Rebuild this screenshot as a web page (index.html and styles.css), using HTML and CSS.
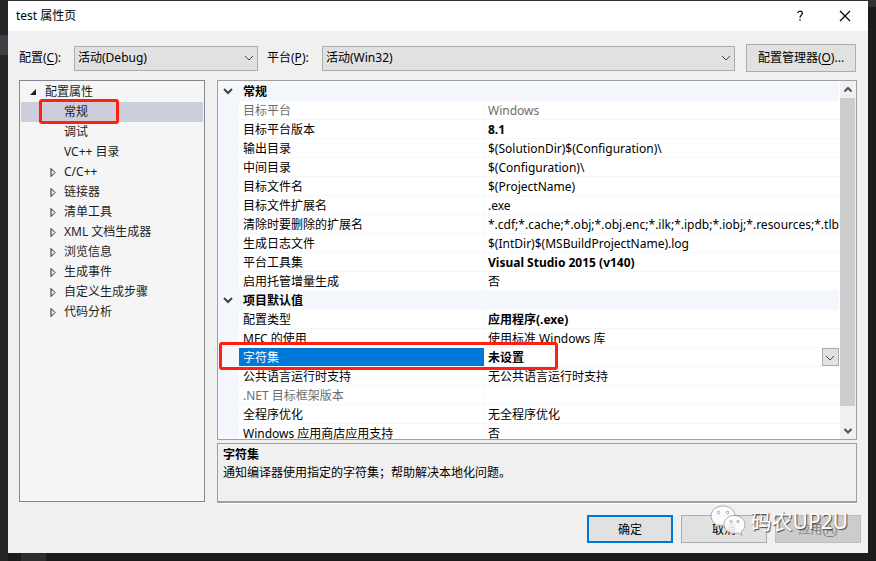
FILE: index.html
```html
<!DOCTYPE html>
<html lang="zh-CN">
<head>
    <meta charset="UTF-8">
    <meta name="viewport" content="width=device-width, initial-scale=1.0">
    <title>test 属性页</title>
    <link rel="stylesheet" href="styles.css">
</head>
<body>
    <div class="dialog">
        <header class="titlebar">
            <h1>test 属性页</h1>
            <button class="title-btn" type="button" aria-label="帮助">
                <svg width="12" height="12" viewBox="0 0 12 12"><path d="M3.7 3.2Q4 1.2 6 1.2Q8.3 1.2 8.3 3.2Q8.3 4.4 7 5.4Q6 6.2 6 7.8M6 9.3V10.8" /></svg>
            </button>
            <button class="title-btn" type="button" aria-label="关闭">
                <svg width="12" height="12" viewBox="0 0 12 12"><path d="M1 1L11 11M11 1L1 11" /></svg>
            </button>
        </header>
        <div class="toolbar">
            <label for="config">配置(<u>C</u>):</label>
            <div class="select config">
                <select id="config"><option>活动(Debug)</option></select>
                <svg class="arrow" width="10" height="6" viewBox="0 0 10 6"><path d="M1 1L5 5L9 1" /></svg>
            </div>
            <label for="platform">平台(<u>P</u>):</label>
            <div class="select platform">
                <select id="platform"><option>活动(Win32)</option></select>
                <svg class="arrow" width="10" height="6" viewBox="0 0 10 6"><path d="M1 1L5 5L9 1" /></svg>
            </div>
            <button class="btn manager" type="button">配置管理器(<u>O</u>)...</button>
        </div>
        <main class="main">
            <ul class="tree">
                <li class="root"><svg width="8" height="8" viewBox="0 0 8 8"><path d="M7 1V7H1Z" fill="#1e1e1e" /></svg>配置属性</li>
                <li class="selected">常规<span class="mark"></span></li>
                <li>调试</li>
                <li>VC++ 目录</li>
                <li><svg width="6" height="9" viewBox="0 0 6 9"><path d="M1 0.5L5 4.5L1 8.5Z" /></svg>C/C++</li>
                <li><svg width="6" height="9" viewBox="0 0 6 9"><path d="M1 0.5L5 4.5L1 8.5Z" /></svg>链接器</li>
                <li><svg width="6" height="9" viewBox="0 0 6 9"><path d="M1 0.5L5 4.5L1 8.5Z" /></svg>清单工具</li>
                <li><svg width="6" height="9" viewBox="0 0 6 9"><path d="M1 0.5L5 4.5L1 8.5Z" /></svg>XML 文档生成器</li>
                <li><svg width="6" height="9" viewBox="0 0 6 9"><path d="M1 0.5L5 4.5L1 8.5Z" /></svg>浏览信息</li>
                <li><svg width="6" height="9" viewBox="0 0 6 9"><path d="M1 0.5L5 4.5L1 8.5Z" /></svg>生成事件</li>
                <li><svg width="6" height="9" viewBox="0 0 6 9"><path d="M1 0.5L5 4.5L1 8.5Z" /></svg>自定义生成步骤</li>
                <li><svg width="6" height="9" viewBox="0 0 6 9"><path d="M1 0.5L5 4.5L1 8.5Z" /></svg>代码分析</li>
            </ul>
            <div class="right">
                <div class="props">
                    <div class="view">
                        <table>
                            <colgroup><col class="gutter"><col class="name"><col></colgroup>
                            <tbody>
                                <tr class="group"><td><svg width="10" height="7" viewBox="0 0 10 7"><path d="M1 1L5 5L9 1" /></svg></td><th colspan="2">常规</th></tr>
                                <tr class="off"><td></td><th>目标平台</th><td>Windows</td></tr>
                                <tr><td></td><th>目标平台版本</th><td><b>8.1</b></td></tr>
                                <tr><td></td><th>输出目录</th><td>$(SolutionDir)$(Configuration)\</td></tr>
                                <tr><td></td><th>中间目录</th><td>$(Configuration)\</td></tr>
                                <tr><td></td><th>目标文件名</th><td>$(ProjectName)</td></tr>
                                <tr><td></td><th>目标文件扩展名</th><td>.exe</td></tr>
                                <tr><td></td><th>清除时要删除的扩展名</th><td>*.cdf;*.cache;*.obj;*.obj.enc;*.ilk;*.ipdb;*.iobj;*.resources;*.tlb;*.tli</td></tr>
                                <tr><td></td><th>生成日志文件</th><td>$(IntDir)$(MSBuildProjectName).log</td></tr>
                                <tr><td></td><th>平台工具集</th><td><b>Visual Studio 2015 (v140)</b></td></tr>
                                <tr><td></td><th>启用托管增量生成</th><td>否</td></tr>
                                <tr class="group"><td><svg width="10" height="7" viewBox="0 0 10 7"><path d="M1 1L5 5L9 1" /></svg></td><th colspan="2">项目默认值</th></tr>
                                <tr><td></td><th>配置类型</th><td><b>应用程序(.exe)</b></td></tr>
                                <tr><td></td><th>MFC 的使用</th><td>使用标准 Windows 库</td></tr>
                                <tr class="current">
                                    <td class="anchor"><span class="mark"></span></td>
                                    <th><label for="charset">字符集</label></th>
                                    <td>
                                        <div class="select cell">
                                            <select id="charset"><option>未设置</option></select>
                                            <span class="drop"><svg class="arrow" width="10" height="6" viewBox="0 0 10 6"><path d="M1 1L5 5L9 1" /></svg></span>
                                        </div>
                                    </td>
                                </tr>
                                <tr><td></td><th>公共语言运行时支持</th><td>无公共语言运行时支持</td></tr>
                                <tr class="off"><td></td><th>.NET 目标框架版本</th><td></td></tr>
                                <tr><td></td><th>全程序优化</th><td>无全程序优化</td></tr>
                                <tr><td></td><th>Windows 应用商店应用支持</th><td>否</td></tr>
                            </tbody>
                        </table>
                    </div>
                    <div class="scrollbar">
                        <svg width="10" height="17" viewBox="0 0 10 17"><path d="M1.5 10.5L5 7L8.5 10.5" /></svg>
                        <div class="track"><div class="thumb"></div></div>
                        <svg width="10" height="17" viewBox="0 0 10 17"><path d="M1.5 7L5 10.5L8.5 7" /></svg>
                    </div>
                </div>
                <div class="help">
                    <h2>字符集</h2>
                    <p>通知编译器使用指定的字符集；帮助解决本地化问题。</p>
                </div>
            </div>
        </main>
        <footer class="footer">
            <button class="btn ok" type="button">确定</button>
            <button class="btn" type="button">取消</button>
            <button class="btn" type="button" disabled>应用(<u>A</u>)</button>
        </footer>
        <div class="watermark">
            <svg width="36" height="32" viewBox="0 0 36 32">
                <path d="M13 1C6 1 1 5.500 1 11C1 14.500 3 17 5.500 19L4.500 22.500L9 20.500Q11 21 13 21C20 21 25 16.500 25 11C25 5.500 20 1 13 1Z" />
                <path d="M24.500 10.500C18.500 10.500 14 14.500 14 19.500C14 24.500 18.500 28.500 24.500 28.500Q26.500 28.500 28.500 28L32 30.500L31 27C33.500 25 35 22.500 35 19.500C35 14.500 30.500 10.500 24.500 10.500Z" />
                <g class="eyes"><circle cx="8.500" cy="7.500" r="1.300" /><circle cx="17.500" cy="7.500" r="1.300" /><circle cx="21" cy="16.500" r="1.100" /><circle cx="28" cy="16.500" r="1.100" /></g>
            </svg>
            <span>码农UP2U</span>
        </div>
    </div>
</body>
</html>
```
FILE: styles.css
```css
*{
    box-sizing: border-box;
}
body{
    margin: 0;
    height: 100vh;
    padding: 1px 8px 8px;
    background:
        linear-gradient(#3f3f46, #3f3f46) 0 35px / 8px 20px no-repeat,
        linear-gradient(#333337, #333337) 100% 0 / 8px 7px no-repeat,
        linear-gradient(#2d2d30, #2d2d30) 21px 100% / 25px 8px no-repeat,
        linear-gradient(#252526, #252526) 0 0 / 8px 100% no-repeat,
        linear-gradient(#2d2d30, #2d2d30) 0 0 / 100% 1px no-repeat,
        #1b1b1c;
    font-family: "Noto Sans", "Noto Sans CJK SC", sans-serif;
    font-size: 12px;
    line-height: 18px;
    color: #000;
}
button, select{
    font: inherit;
    color: inherit;
}
svg{
    fill: none;
    stroke: #444;
    flex: none;
}
u{
    text-underline-offset: 2px;
}
.dialog{
    position: relative;
    height: 100%;
    display: flex;
    flex-direction: column;
    background: #f0f0f0;
}
.titlebar{
    height: 30px;
    display: flex;
    align-items: center;
    padding: 0 1px 0 8px;
    background: #fff;
}
.titlebar h1{
    flex: 1;
    margin: 0;
    font-size: 12px;
    font-weight: 400;
}
.title-btn{
    width: 45px;
    height: 30px;
    padding: 0;
    border: 0;
    background: none;
}
.title-btn svg{
    display: block;
    margin: auto;
    stroke: #000;
    stroke-width: 1.2;
}
.toolbar{
    display: flex;
    align-items: center;
    padding: 13px 12px 8px 11px;
}
.toolbar label{
    width: 55px;
}
.select{
    position: relative;
}
.select select{
    display: block;
    width: 100%;
    height: 25px;
    padding: 0 3px;
    border: 1px solid #adadad;
    border-radius: 0;
    background: #e1e1e1;
    appearance: none;
}
.select .arrow{
    position: absolute;
    right: 4px;
    top: 9px;
    pointer-events: none;
}
.config{
    flex: 184 1 0;
    margin-right: 9px;
}
.platform{
    flex: 413 1 0;
}
.btn{
    width: 86px;
    height: 28px;
    padding: 0;
    border: 1px solid #adadad;
    background: #e1e1e1;
}
.btn:disabled{
    border-color: #bfbfbf;
    background: #ccc;
    color: #838383;
}
.manager{
    width: 110px;
    margin-left: 11px;
}
.ok{
    border: 2px solid #0078d7;
}
.main{
    flex: 1;
    min-height: 0;
    display: flex;
    gap: 12px;
    padding: 0 11px;
}
.tree{
    width: 186px;
    margin: 0 0 1px;
    padding: 1px;
    border: 1px solid #828790;
    background: #f5f5f5;
    color: #1e1e1e;
    list-style: none;
}
.tree li{
    position: relative;
    height: 20px;
    padding-left: 43px;
    line-height: 20px;
}
.tree .root{
    padding-left: 24px;
}
.tree svg{
    position: absolute;
    left: 29px;
    top: 6px;
    stroke: #1e1e1e;
}
.tree .root svg{
    left: 8px;
    stroke: none;
}
.tree .selected{
    background: #cccedb;
}
.mark{
    position: absolute;
    z-index: 1;
    border: 3px solid #ff2012;
    border-radius: 3px;
}
.tree .mark{
    left: 18px;
    top: -3px;
    width: 80px;
    height: 25px;
}
.right{
    flex: 1;
    min-width: 0;
    display: flex;
    flex-direction: column;
    gap: 3px;
}
.props{
    flex: 1;
    min-height: 0;
    display: flex;
    border: 1px solid #a0a0a0;
    background: #f0f0f0;
}
.view{
    flex: 1;
    min-width: 0;
    overflow: hidden;
    padding-top: 1px;
    border-right: 1px solid #fff;
    background: #f4f7fc;
}
table{
    width: 100%;
    table-layout: fixed;
    border-collapse: separate;
    border-spacing: 0;
    background: #fff;
}
.gutter{
    width: 21px;
}
.name{
    width: 246px;
}
th, td{
    height: 19px;
    padding: 2px 0 0 4px;
    border-bottom: 1px solid #f4f7fc;
    line-height: 16px;
    font-weight: 400;
    text-align: left;
    white-space: nowrap;
    overflow: hidden;
}
th{
    border-right: 1px solid #f4f7fc;
}
td:last-child{
    padding-left: 3px;
}
td:first-child, .group th{
    background: #f4f7fc;
}
.group td:first-child{
    padding: 0 0 0 5px;
}
.group th{
    font-weight: 700;
}
.group svg{
    display: block;
    stroke-width: 2;
}
.off th, .off td{
    color: #6d6d6d;
}
.current th{
    background: #0078d7;
    background-clip: padding-box;
    color: #fff;
}
.current td:last-child{
    padding: 0;
}
.current .anchor{
    position: relative;
    overflow: visible;
}
.anchor .mark{
    left: 1px;
    top: -6px;
    width: 339px;
    height: 28px;
}
.cell select{
    height: 18px;
    padding-top: 2px;
    border: 0;
    background: #fff;
    font-weight: 700;
    line-height: 16px;
}
.drop{
    position: absolute;
    right: 0;
    top: 0;
    width: 17px;
    height: 18px;
    border: 1px solid #adadad;
    background: #e1e1e1;
    pointer-events: none;
}
.drop .arrow{
    right: 3px;
    top: 6px;
}
.scrollbar{
    width: 16px;
    display: flex;
    flex-direction: column;
    padding-right: 1px;
}
.scrollbar svg{
    align-self: center;
    stroke: #505050;
    stroke-width: 2;
}
.track{
    flex: 1;
}
.thumb{
    height: 95%;
    background: #cdcdcd;
}
.help{
    height: 60px;
    padding: 2px 5px;
    border: 1px solid #a0a0a0;
    border-bottom-width: 2px;
    box-shadow: 0 1px #fff;
}
.help h2, .help p{
    margin: 0;
    font-size: 12px;
}
.footer{
    display: flex;
    justify-content: flex-end;
    gap: 8px;
    padding: 12px 7px 10px;
}
.footer .btn{
    padding-top: 1px;
}
.watermark{
    position: absolute;
    right: 20px;
    bottom: 16px;
    display: flex;
    align-items: center;
    gap: 5px;
    color: #fff;
    font-size: 21px;
    line-height: 32px;
    text-shadow: 1px 1px 1px #444;
    pointer-events: none;
}
.watermark svg{
    fill: rgba(255, 255, 255, 0.85);
    stroke: #777;
    stroke-width: 0.6;
}
.watermark .eyes{
    fill: #fff;
    stroke: #777;
}
```
